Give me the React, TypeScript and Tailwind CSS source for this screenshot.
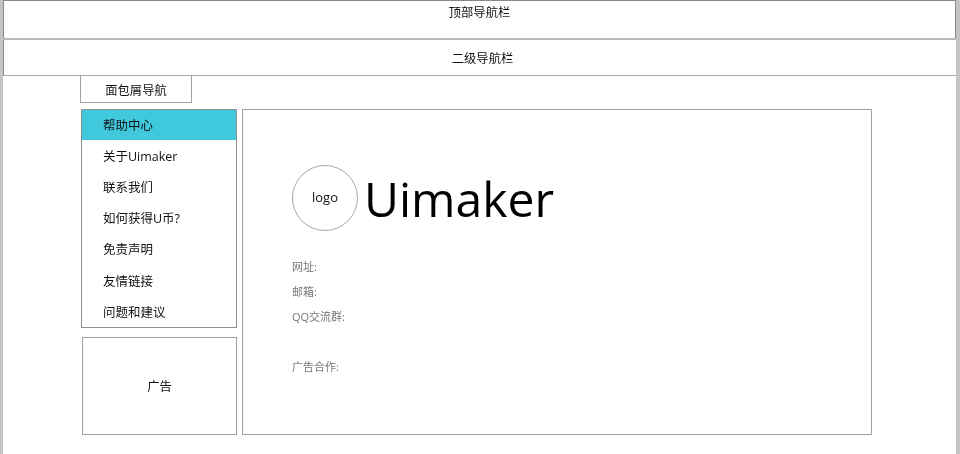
import React from "react";

const font = "font-['Open_Sans','Noto_Sans_CJK_SC',sans-serif]";

const menu = [
  { label: "帮助中心", cls: "h-[30px] mb-px bg-[#40c8dc]" },
  { label: "关于Uimaker", cls: "h-[31px]" },
  { label: "联系我们", cls: "h-[31px]" },
  { label: "如何获得U币?", cls: "h-[31px]" },
  { label: "免责声明", cls: "h-[31px]" },
  { label: "友情链接", cls: "h-[31px] mt-px" },
  { label: "问题和建议", cls: "h-[30px]" },
];

export default function App() {
  return (
    <div className={`h-[454px] w-[960px] overflow-hidden bg-[#c4c4c4] pl-[3px] pr-[4px] ${font}`}>
      <div className="h-full w-full bg-white blur-[0.3px]">
        {/* top navigation */}
        <div className="flex h-[38px] justify-center border border-b-0 border-[#8a8a8a] pt-[3px] text-[12.3px] leading-[18px] text-[#111]">
          顶部导航栏
        </div>
        <div className="h-[2px] bg-[#b8b8b8]" />
        <div className="flex h-[36px] items-center justify-center border-b border-l border-[#8a8a8a] border-b-[#a8a8a8] pl-[5px] pt-[3px] text-[12.3px] text-[#111]">
          二级导航栏
        </div>

        <div className="ml-[77px] flex h-[27px] w-[112px] items-center justify-center border border-t-0 border-[#a0a0a0] pt-[4px] text-[12.3px] text-[#111]">
          面包屑导航
        </div>

        <div className="ml-[78px] mt-[6px] flex gap-[5px]">
          <div className="flex w-[156px] flex-col gap-[9px]">
            <div className="h-[219px] border border-[#8f8f8f]">
              {menu.map((item) => (
                <div
                  key={item.label}
                  className={`flex items-center pl-[21px] pt-[2px] text-[12.5px] text-[#111] ${item.cls}`}
                >
                  {item.label}
                </div>
              ))}
            </div>
            <div className="ml-px flex h-[98px] items-center justify-center border border-[#a0a0a0] pt-[2px] text-[12.3px] text-[#111]">
              广告
            </div>
          </div>

          <div className="h-[326px] w-[630px] border border-[#a0a0a0] pl-[49px] pt-[55px]">
            <div className="flex items-center gap-[6px]">
              <div className="flex h-[66px] w-[66px] items-center justify-center rounded-full border border-[#a8a8a8] text-[13px] text-[#111]">
                logo
              </div>
              <span className="pt-[1px] text-[48px] leading-[63px] text-black">Uimaker</span>
            </div>
            <div className="mt-[23px] flex flex-col text-[11px] text-[#777]">
              <div className="h-[25px] leading-[25px]">网址:</div>
              <div className="h-[25px] leading-[25px]">邮箱:</div>
              <div className="h-[25px] leading-[25px]">QQ交流群:</div>
              <div className="mt-[25px] h-[25px] leading-[25px]">广告合作:</div>
            </div>
          </div>
        </div>
      </div>
    </div>
  );
}
